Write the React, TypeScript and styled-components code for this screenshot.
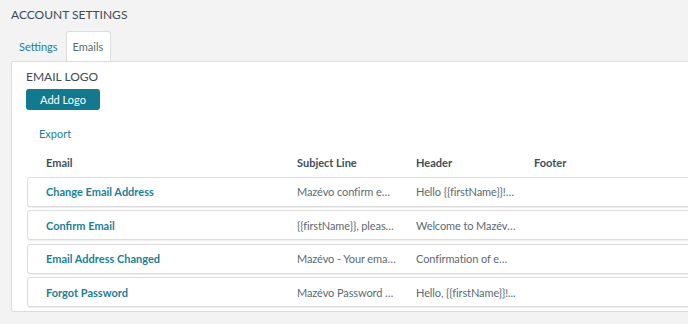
import React from "react";
import styled, { createGlobalStyle } from "styled-components";

const Global = createGlobalStyle`
  html, body { margin: 0; padding: 0; }
  body {
    background: #f3f3f3;
    font-family: Lato, "Open Sans", sans-serif;
    overflow: hidden;
    width: 688px;
    height: 324px;
  }
`;

const Page = styled.div`
  padding: 6px 0 0 11px;
`;

const Title = styled.h1`
  margin: 0;
  font-size: 12px;
  font-weight: 400;
  line-height: 18px;
  color: #3b4b57;
`;

const Tabs = styled.div`
  display: flex;
  margin-top: 7px;
  height: 30px;
`;

const Tab = styled.div<{ $active?: boolean }>`
  display: flex;
  align-items: center;
  padding: ${(p) => (p.$active ? "0 7px 1px 6px" : "0 7px 1px 7px")};
  font-size: 11px;
  color: ${(p) => (p.$active ? "#5b6a73" : "#1c8098")};
  background: ${(p) => (p.$active ? "#fff" : "transparent")};
  border: 1px solid ${(p) => (p.$active ? "#dcdcdc" : "transparent")};
  border-bottom: none;
  border-radius: 3px 3px 0 0;
  position: relative;
  z-index: 1;
  height: 30px;
  box-sizing: border-box;
  margin-bottom: -1px;
`;

const Panel = styled.div`
  background: #fff;
  border: 1px solid #dcdcdc;
  border-radius: 2px;
  width: 740px;
  box-sizing: border-box;
  padding: 6px 0 4px 14px;
`;

const SectionTitle = styled.h2`
  margin: 0;
  font-size: 12px;
  font-weight: 400;
  line-height: 18px;
  color: #3b4b57;
`;

const Button = styled.button`
  display: block;
  margin-top: 3px;
  width: 74px;
  height: 21px;
  border: none;
  border-radius: 3px;
  background: #12798f;
  color: #fff;
  font-family: inherit;
  font-size: 11px;
  padding: 0;
`;

const LinkText = styled.a`
  display: inline-block;
  margin: 16px 0 0 13px;
  font-size: 11px;
  line-height: 16px;
  color: #1c8098;
  text-decoration: none;
`;

const Table = styled.div`
  margin-top: 8px;
  display: flex;
  flex-direction: column;
  gap: 3.6px;
  margin-left: 1px;
`;

const Row = styled.div<{ $head?: boolean }>`
  display: grid;
  grid-template-columns: 251px 119px 118px 1fr;
  align-items: center;
  padding-left: 18px;
  padding-top: ${(p) => (p.$head ? "2px" : "0")};
  height: ${(p) => (p.$head ? "23px" : "30px")};
  box-sizing: border-box;
  border: 1px solid ${(p) => (p.$head ? "transparent" : "#dcdcdc")};
  border-radius: 3px;
  box-shadow: ${(p) => (p.$head ? "none" : "0 1px 0 #efefef")};
  background: #fff;
`;

const HeadCell = styled.div`
  font-size: 11px;
  font-weight: 700;
  color: #3e4f5a;
`;

const NameCell = styled.div`
  font-size: 11px;
  font-weight: 700;
  color: #1b7f96;
`;

const Cell = styled.div`
  font-size: 11px;
  letter-spacing: -0.1px;
  color: #5b6a73;
  white-space: nowrap;
  overflow: hidden;
  text-overflow: ellipsis;
  max-width: 100px;
`;

const rows = [
  { name: "Change Email Address", subject: "Mazévo confirm email address", header: "Hello {{firstName}}! Please confirm" },
  { name: "Confirm Email", subject: "{{firstName}}, please confirm", header: "Welcome to Mazévo, {{firstName}}" },
  { name: "Email Address Changed", subject: "Mazévo - Your email address", header: "Confirmation of email change" },
  { name: "Forgot Password", subject: "Mazévo Password Reset", header: "Hello, {{firstName}}!..." },
];

export default function App() {
  return (
    <>
      <Global />
      <Page>
        <Title>ACCOUNT SETTINGS</Title>
        <Tabs>
          <Tab>Settings</Tab>
          <Tab $active>Emails</Tab>
        </Tabs>
        <Panel>
          <SectionTitle>EMAIL LOGO</SectionTitle>
          <Button>Add Logo</Button>
          <LinkText href="#">Export</LinkText>
          <Table>
            <Row $head>
              <HeadCell>Email</HeadCell>
              <HeadCell>Subject Line</HeadCell>
              <HeadCell>Header</HeadCell>
              <HeadCell>Footer</HeadCell>
            </Row>
            {rows.map((r) => (
              <Row key={r.name}>
                <NameCell>{r.name}</NameCell>
                <Cell>{r.subject}</Cell>
                <Cell>{r.header}</Cell>
                <Cell />
              </Row>
            ))}
          </Table>
        </Panel>
      </Page>
    </>
  );
}
